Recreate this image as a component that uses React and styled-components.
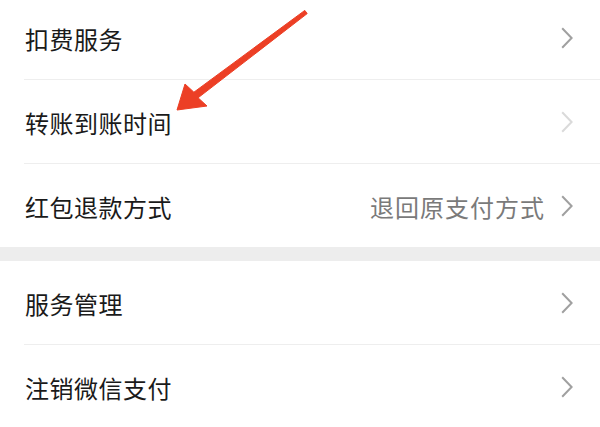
import styled, { createGlobalStyle } from 'styled-components';

const GlobalStyle = createGlobalStyle`
    html, body {
        margin: 0;
        padding: 0;
        background: #ffffff;
        overflow: hidden;
    }
    body {
        font-family: "Noto Sans CJK SC", "Noto Sans", sans-serif;
    }
`;

const groups = [
    [
        { label: '扣费服务' },
        { label: '转账到账时间', faded: true },
        { label: '红包退款方式', value: '退回原支付方式' },
    ],
    [
        { label: '服务管理' },
        { label: '注销微信支付' },
    ],
];

const Chevron = ({ faded }) => (
    <ChevronIcon width="12" height="22" viewBox="0 0 12 22" $faded={faded}>
        <path d="M1.2 1.2 L10.6 11 L1.2 20.8" fill="none" strokeWidth="2" />
    </ChevronIcon>
);

// red annotation arrow drawn over the list
const Arrow = () => (
    <ArrowLayer width="600" height="427" viewBox="0 0 600 427">
        <polygon
            points="304.8,10.4 193.9,92.2 185,84 177,110 207,106 198.1,97.8 307.2,13.6"
            fill="#ec3f25"
            strokeLinejoin="round"
            stroke="#ec3f25"
            strokeWidth="1"
        />
    </ArrowLayer>
);

const App = () => <>
    <GlobalStyle />
    <Page>
        {groups.map((rows, gi) => (
            <Group key={gi} $first={gi === 0}>
                {rows.map((row, ri) => (
                    <Row key={row.label} $last={gi === 0 && ri === rows.length - 1}>
                        <Label>{row.label}</Label>
                        <Right>
                            {row.value && <Value>{row.value}</Value>}
                            <Chevron faded={row.faded} />
                        </Right>
                    </Row>
                ))}
            </Group>
        ))}
        <Arrow />
    </Page>
</>

const Page = styled.div`
    position: relative;
    width: 600px;
    height: 427px;
    overflow: hidden;
    background: #ffffff;
`;

const Group = styled.div`
    display: flex;
    flex-direction: column;
    margin-top: ${p => p.$first ? '-4px' : '0'};
    border-bottom: ${p => p.$first ? '14px solid #ededed' : 'none'};
`;

const Row = styled.div`
    display: flex;
    align-items: center;
    justify-content: space-between;
    height: 82px;
    margin-left: 24px;
    padding-left: 1px;
    padding-right: 27px;
    padding-top: 1px;
    box-sizing: content-box;
    border-bottom: ${p => p.$last ? 'none' : '1px solid #eeeeee'};
`;

const Label = styled.span`
    font-size: 24px;
    color: #1a1a1a;
    letter-spacing: 0.5px;
`;

const Right = styled.div`
    display: flex;
    align-items: center;
    gap: 16px;
`;

const Value = styled.span`
    font-size: 24px;
    color: #7a7a7a;
    letter-spacing: 1px;
`;

const ChevronIcon = styled.svg`
    display: block;
    stroke: ${p => p.$faded ? '#dadada' : '#a0a0a0'};
`;

const ArrowLayer = styled.svg`
    position: absolute;
    left: 0;
    top: 0;
    pointer-events: none;
`;

export default App
